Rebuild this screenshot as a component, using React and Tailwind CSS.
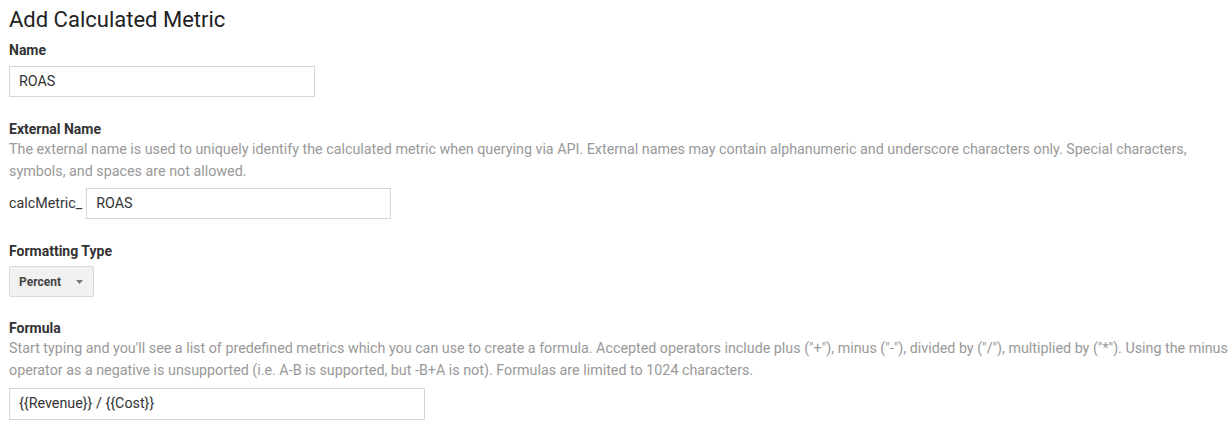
import React from 'react';

const Label = ({ children, className = '' }) => (
  <div className={`text-[14px] font-bold text-[#333] leading-[18px] ${className}`}>{children}</div>
);

const Help = ({ children }) => (
  <p className="text-[14.3px] text-[#999] leading-[22px]">{children}</p>
);

const TextBox = ({ value, width, height = 'h-[31px]' }) => (
  <div className={`${width} ${height} border border-[#d6d6d6] bg-white flex items-center px-[9px] text-[14.3px] text-[#333]`}>
    {value}
  </div>
);

export default function App() {
  return (
    <div className="bg-white w-[1232px] h-[432px] overflow-hidden pl-[9px] pr-[4px] pt-[7px]" style={{ fontFamily: 'Roboto, "Liberation Sans", sans-serif' }}>
      <h1 className="text-[22px] leading-[26px] text-[#222]">Add Calculated Metric</h1>

      <Label className="mt-[8px]">Name</Label>
      <div className="mt-[7px]">
        <TextBox value="ROAS" width="w-[306px]" />
      </div>

      <Label className="mt-[23px]">External Name</Label>
      <Help>
        The external name is used to uniquely identify the calculated metric when querying via API. External names may contain alphanumeric and underscore characters only. Special characters, symbols, and spaces are not allowed.
      </Help>
      <div className="mt-[6px] flex items-center gap-[4px]">
        <span className="text-[14.3px] text-[#333]">calcMetric_</span>
        <TextBox value="ROAS" width="w-[305px]" />
      </div>

      <Label className="mt-[23px]">Formatting Type</Label>
      <div className="mt-[6px]">
        <button className="h-[31px] w-[85px] bg-[#f1f1f1] border border-[#d9d9d9] rounded-[2px] flex items-center pl-[9px] pr-[10px] justify-between text-[12px] font-bold text-[#444]">
          <span>Percent</span>
          <svg width="7" height="4" viewBox="0 0 7 4"><path d="M0 0h7L3.5 4z" fill="#777" /></svg>
        </button>
      </div>

      <Label className="mt-[22px]">Formula</Label>
      <Help>
        Start typing and you'll see a list of predefined metrics which you can use to create a formula. Accepted operators include plus ("+"), minus ("-"), divided by ("/"), multiplied by ("*"). Using the minus operator as a negative is unsupported (i.e. A-B is supported, but -B+A is not). Formulas are limited to 1024 characters.
      </Help>
      <div className="mt-[7px]">
        <TextBox value="{{Revenue}} / {{Cost}}" width="w-[416px]" height="h-[32px]" />
      </div>
    </div>
  );
}
